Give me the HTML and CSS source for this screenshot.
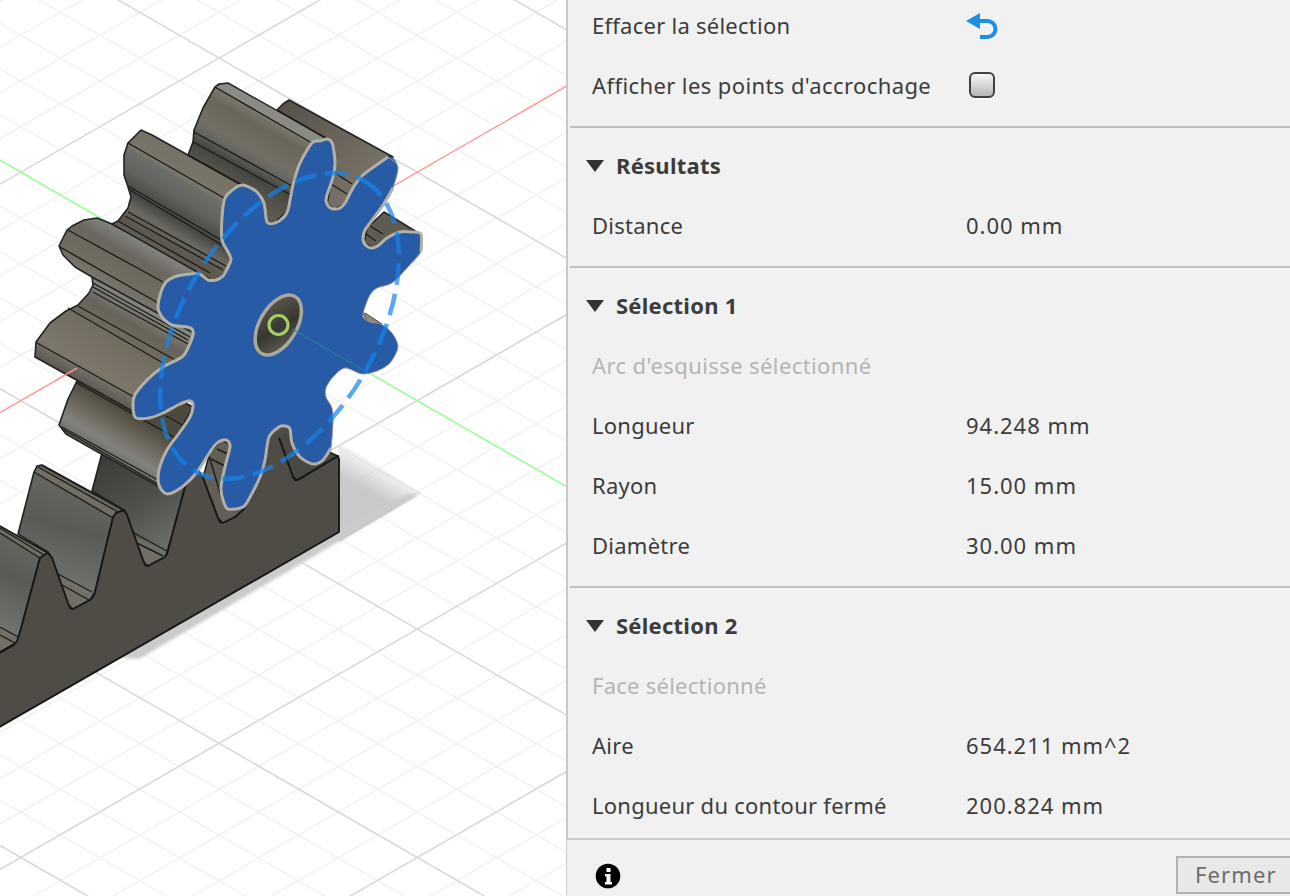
FILE: index.html
```
<!DOCTYPE html>
<html lang="fr">
<head>
<meta charset="utf-8">
<title>Mesurer</title>
<link rel="stylesheet" href="styles.css">
</head>
<body>
<main class="app">
<div class="viewport">
<svg class="scene" viewBox="0 0 567 896" width="567" height="896">
<defs>
<linearGradient id="ga" gradientUnits="userSpaceOnUse" x1="230" y1="90" x2="188" y2="164"><stop offset="0" stop-color="#858175"/><stop offset=".2" stop-color="#6a655a"/><stop offset=".48" stop-color="#746f65"/><stop offset=".6" stop-color="#656560"/><stop offset=".73" stop-color="#444540"/><stop offset="1" stop-color="#5e5950"/></linearGradient>
<linearGradient id="gd" gradientUnits="userSpaceOnUse" x1="160" y1="150" x2="113" y2="230"><stop offset="0" stop-color="#777267"/><stop offset=".14" stop-color="#7b766a"/><stop offset=".15" stop-color="#6d6f6a"/><stop offset=".35" stop-color="#62635e"/><stop offset=".55" stop-color="#454641"/><stop offset=".7" stop-color="#6b6961"/><stop offset=".85" stop-color="#5c564c"/><stop offset="1" stop-color="#6a645a"/></linearGradient>
<linearGradient id="ge" gradientUnits="userSpaceOnUse" x1="128" y1="232" x2="90" y2="299"><stop offset="0" stop-color="#858681"/><stop offset=".25" stop-color="#6a665e"/><stop offset=".6" stop-color="#726d62"/><stop offset=".8" stop-color="#7c7a73"/><stop offset="1" stop-color="#4f504b"/></linearGradient>
<linearGradient id="gg" gradientUnits="userSpaceOnUse" x1="130" y1="301" x2="83" y2="383"><stop offset="0" stop-color="#83847e"/><stop offset=".2" stop-color="#68635a"/><stop offset=".45" stop-color="#736d62"/><stop offset=".83" stop-color="#7d776b"/><stop offset="1" stop-color="#5b5a54"/></linearGradient>
<linearGradient id="gf" gradientUnits="userSpaceOnUse" x1="135" y1="415" x2="108" y2="461"><stop offset="0" stop-color="#4c493f"/><stop offset=".35" stop-color="#6a655b"/><stop offset=".7" stop-color="#83827c"/><stop offset="1" stop-color="#696861"/></linearGradient>
<linearGradient id="gb" gradientUnits="userSpaceOnUse" x1="285" y1="105" x2="370" y2="180"><stop offset="0" stop-color="#57534a"/><stop offset="1" stop-color="#797267"/></linearGradient>
<linearGradient id="gr" x1=".6" y1="0" x2=".4" y2="1"><stop offset="0" stop-color="#6b6b66"/><stop offset=".45" stop-color="#5a5b56"/><stop offset="1" stop-color="#7b7c77"/></linearGradient>
<linearGradient id="gr2" x1=".2" y1="0" x2=".7" y2="1"><stop offset="0" stop-color="#3c3d39"/><stop offset=".5" stop-color="#50514c"/><stop offset="1" stop-color="#73756f"/></linearGradient>
<linearGradient id="hole" x1="0" y1="1" x2="1" y2="0"><stop offset="0" stop-color="#6d685d"/><stop offset=".45" stop-color="#38372f"/><stop offset="1" stop-color="#625e54"/></linearGradient>
<linearGradient id="sh" gradientUnits="userSpaceOnUse" x1="385" y1="462" x2="368" y2="492"><stop offset="0" stop-color="#c6c6c6" stop-opacity="0"/><stop offset="1" stop-color="#c9c9c9"/></linearGradient>
<filter id="soft" x="-10%" y="-10%" width="120%" height="120%"><feGaussianBlur stdDeviation="1.5"/></filter>
</defs>

<g id="grid">
<path class="minor" d="M0-342.3l567 326.7m-567-281l567 326.7m-567-281l567 326.7m-567-281l567 326.7m-567-281l567 326.7m-567-281l567 326.7m-567-281l567 326.7m-567-281l567 326.7m-567-281l567 326.7m-567-281l567 326.7m-567-281l567 326.7m-567-281l567 326.7m-567-281l567 326.7m-567-281l567 326.7m-567-281l567 326.7m-567-281l567 326.7m-567-281l567 326.7m-567-281l567 326.7m-567-281l567 326.7m-567-281l567 326.7m-567-281l567 326.7m-567-281l567 326.7m-567-281l567 326.7m-567-281l567 326.7m-567-281l567 326.7m-567-281l567 326.7m-567-281l567 326.7"/>
<path class="minor" d="M0 1.5l567-326.7m-567 372.4l567-326.7m-567 372.4l567-326.7m-567 372.4l567-326.7m-567 372.4l567-326.7m-567 372.4l567-326.7m-567 372.4l567-326.7m-567 372.4l567-326.7m-567 372.4l567-326.7m-567 372.4l567-326.7m-567 372.4l567-326.7m-567 372.4l567-326.7m-567 372.4l567-326.7m-567 372.4l567-326.7m-567 372.4l567-326.7m-567 372.4l567-326.7m-567 372.4l567-326.7m-567 372.4l567-326.7m-567 372.4l567-326.7m-567 372.4l567-326.7m-567 372.4l567-326.7m-567 372.4l567-326.7m-567 372.4l567-326.7m-567 372.4l567-326.7m-567 372.4l567-326.7m-567 372.4l567-326.7m-567 372.4l567-326.7"/>
<path class="major" d="M0-296.6l567 326.7M0-68.2l567 326.7M0 388.6l567 326.7M0 617l567 326.7M0 845.4l567 326.7M0 184.2l567-326.7M0 641l567-326.7M0 869.4l567-326.7M0 1097.8l567-326.7"/>
</g>

<path d="M339 446L348 448L422 493L339 542Z" fill="url(#sh)"/>
<path d="M339 529L408 494L418 495L139 659L118 657Z" fill="#cbcbcb" filter="url(#soft)"/>
<path class="red" d="M0 412.6L567 85.9"/>
<path class="green" d="M0 160.2L567 486.9"/>

<g class="edge">
<path fill="url(#gr)" d="M-4 524L48 553 40 558 20 632 17 642 -4 654Z"/>
<path fill="url(#gr)" d="M34 472L37 466 42 465 124 510 113 518 95 592 90 600 73 609 68 603 52 558 48 552 18 534Z"/>
<path fill="url(#gr2)" d="M102 453L185 487 168 550 165 557 148 566 143 560 127 515 124 510 92 491Z"/>
<path fill="#625f57" d="M203 478L210 452 222 440 235 447 245 510 235 517 223 523 218 518Z"/>
<path fill="#4a4842" d="M278 435L289 427 320 448 338 456 297 480 293 477Z"/>
</g>
<path fill="#736e63" d="M35 473L40 467 121 511 113 517ZM0 531L0 527 46 553 40 558ZM132 535L165 554 148 565 142 559ZM58 577L90 596 73 608 67 602ZM0 628L17 639 0 650Z"/>
<path class="line" d="M34 472L113 518M38 467L120 513M41 465L123 510M0 533L40 558M0 528L44 555M0 526L48 553M132 532L167 551M137 543L163 556M58 574L92 592M62 585L89 600M0 627L20 638M0 635L15 643"/>
<path class="rack" d="M-4 655L14 645 17 641 20 632 40 558 44 555 48 553 52 558 68 603 70 608 73 609 90 600 93 597 95 592 113 517 116 513 124 510 127 515 143 560 145 565 148 566 165 557 167 554 168 550 185 487 198 470 203 478 218 518 220 522 223 523 235 517 244 509 266 440 278 435 293 477 295 480 298 480 338 456 339 459V532L-4 729Z"/>
<path d="M264 446L269 434 280 424 291 427 292 440 284 432 279 438Z" fill="#4f4c46"/>
<path d="M21 630L200 733M0 689L340 493M107 560L308 676M30 737L339 559" stroke="#77746c" stroke-opacity=".13" clip-path="inset(0 0 180px 0)"/>

<g class="edge">
<path fill="url(#gb)" d="M277 110L283 104 289 100 393 157 388 157 363 175 343 205 334 209 327 204 335 163 327 139Z"/>
<path fill="#5f5b53" d="M384 212L420 234 400 232 387 238 373 248 364 243 367 228Z"/>
<path fill="#91897b" stroke-width=".8" d="M363 314L365 313 382 324 368 323Z"/>
<path fill="url(#gf)" d="M77 381L135 405 180 400 193 407 175 440 158 486 66 434 59 425 68 399Z"/>
<path fill="url(#gg)" d="M92 277L93 285 89 293 78 305 66 311 50 323 36 342 35 357 134 412 193 350 195 328Z"/>
<path fill="url(#ge)" d="M112 224L97 218 84 220 72 226 67 230 59 246 63 255 75 267 92 277 192 332 228 290 220 280Z"/>
<path fill="url(#gd)" d="M141 130L128 143 124 155 124 175 128 187 131 197 128 208 118 221 112 224 208 278 216 284 233 262 222 216 245 187 152 135Z"/>
<path fill="url(#ga)" d="M215 87L219 84 228 83 329 140 312 143 300 163 293 185 288 210 275 223 265 222 264 203 257 192 242 185 188 155 193 142 194 130 203 108Z"/>
</g>
<path fill="#8b8b85" d="M215 87L228 84 326 139 312 143Z"/>
<path class="line" d="M215 87L312 143M194 132L292 186M193 142L291 195M188 155L242 185M277 110L325 138M335 173L352 184M331 184L347 194M370 226L383 234M366 234L376 241M128 143L224 198M128 186L223 241M130 190L222 245M128 212L226 266M125 216L223 270M118 221L210 273M68 230L163 282M60 247L160 304M93 283L190 337M93 287L188 340M93 292L188 344M78 306L175 360M68 308L163 363M37 343L134 397M77 383L174 437M166 416L184 426M62 427L158 480M64 430L158 484M211 459L227 467M217 449L230 455M207 449L221 496"/>
<path d="M55 380.900L77 368.200" class="red"/>

<path class="smooth" fill="#285ba5" d="M312 143L320 141 327 139 331 141 333 146 335 163 333 177 327 195 326 201 329 207 334 209 340 208 345 203 353 188 363 175 388 157 398 167 393 188 383 205 370 223 365 230 363 237 364 243 368 247 373 248 379 245 387 238 400 232 410 232 421 234 421 252 407 268 392 283 377 288 370 295 365 307 363 317 370 322 381 324 392 333 398 347 390 363 377 371 362 374 345 368 333 377 326 388 326 397 332 408 333 423 331 448 323 460 313 464 300 457 292 443 290 429 285 426 279 427 269 437 265 460 260 477 250 497 243 507 228 509 223 500 221 487 225 467 230 447 228 441 223 440 216 444 210 452 197 472 182 487 167 494 159 485 159 470 167 450 180 432 190 417 193 407 192 402 188 401 178 405 163 413 149 418 135 417 134 397 147 380 163 367 182 357 188 348 193 335 192 329 187 327 172 325 162 317 158 308 160 295 166 282 177 276 190 274 200 274 208 280 216 280 223 276 228 267 231 259 227 250 222 240 222 217 225 198 235 188 242 185 249 187 257 192 264 203 267 222 275 223 283 218 288 210 293 185 300 163Z"/>
<path class="rim smooth" d="M331 448L323 460 313 464 300 457 292 443 290 429 285 426 279 427 269 437 265 460 260 477 250 497 243 507 228 509 223 500 221 487 225 467 230 447 228 441 223 440 216 444 210 452 197 472 182 487 167 494 159 485 159 470 167 450 180 432 190 417 193 407 192 402 188 401 178 405 163 413 149 418 135 417 134 397 147 380 163 367 182 357 188 348 193 335 192 329 187 327 172 325 162 317 158 308 160 295 166 282 177 276 190 274 200 274 208 280 216 280 223 276 228 267 231 259 227 250 222 240 222 217 225 198 235 188 242 185 249 187 257 192 264 203 267 222 275 223 283 218 288 210 293 185 300 163 312 143 320 141 327 139 331 141 333 146 335 163 333 177 327 195 326 201 329 207 334 209 340 208 345 203 353 188 363 175 388 157"/>
<path class="rim smooth" d="M393 188L383 205 370 223 365 230 363 237 364 243 368 247 373 248 379 245 387 238 400 232 410 232 421 234 421 252"/>
<path class="smooth" fill="none" stroke="#999992" d="M388 157L398 167 393 188"/>
<path class="smooth" fill="none" stroke="#999992" d="M421 252L407 268 392 283 377 288 370 295 365 307 363 317 370 322 381 324 392 333 398 347 390 363 377 371 362 374 345 368 333 377 326 388 326 397 332 408 333 423 331 448"/>
<ellipse cx="278.3" cy="325" rx="33" ry="18.5" transform="rotate(-59.5 278.3 325)" fill="url(#hole)" stroke="#aaa79f" stroke-width="3.5"/>
<path d="M292 329L363 370" stroke="#287d9c" stroke-width="1.3"/>
<ellipse class="arc" cx="279.5" cy="326" rx="168" ry="97" transform="rotate(-59.5 279.5 326)"/>
<circle cx="278.5" cy="325" r="9.5" fill="none" stroke="#a0cf68" stroke-width="3.2"/>
</svg>
</div>

<section class="panel">
<div class="content">
<div class="group first">
<div class="row"><span class="label">Effacer la sélection</span><svg class="undo" width="34" height="28" viewBox="0 0 34 28"><path d="M0 8L14 0V16Z" fill="#1a8fe8"/><path d="M12 8H21.500A8 8 0 0 1 21.500 24H14" fill="none" stroke="#1a8fe8" stroke-width="4"/></svg></div>
<div class="row"><span class="label wide">Afficher les points d'accrochage</span><span class="check"></span></div>
</div>
<div class="group">
<div class="row head"><i class="tri"></i><span>Résultats</span></div>
<div class="row"><span class="label">Distance</span><span class="value">0.00 mm</span></div>
</div>
<div class="group">
<div class="row head"><i class="tri"></i><span>Sélection 1</span></div>
<div class="row muted wide"><span>Arc d'esquisse sélectionné</span></div>
<div class="row"><span class="label">Longueur</span><span class="value">94.248 mm</span></div>
<div class="row"><span class="label">Rayon</span><span class="value">15.00 mm</span></div>
<div class="row"><span class="label">Diamètre</span><span class="value">30.00 mm</span></div>
</div>
<div class="group">
<div class="row head"><i class="tri"></i><span>Sélection 2</span></div>
<div class="row muted"><span>Face sélectionné</span></div>
<div class="row"><span class="label">Aire</span><span class="value">654.211 mm^2</span></div>
<div class="row"><span class="label">Longueur du contour fermé</span><span class="value">200.824 mm</span></div>
</div>
</div>
<footer class="footer">
<svg width="26" height="26" viewBox="0 0 26 26"><circle cx="13" cy="13" r="12.300" fill="#000"/><path d="M11.500 5h4v4h-4zM10 11h5.500v8H17v2.500h-7V19h1.500v-5.500H10z" fill="#fff"/></svg>
<button class="close">Fermer</button>
</footer>
</section>
</main>
<script src="scene.js"></script>
</body>
</html>
```
FILE: styles.css
```
* { box-sizing: border-box; }
body { margin: 0; background: #fff; overflow: hidden; }
.app { display: flex; width: 1290px; height: 896px; overflow: hidden; }
.viewport { width: 566px; flex: none; overflow: hidden; }
.scene { display: block; }
.minor { fill: none; stroke: #f0f0f0; stroke-width: 1.3; }
.major { fill: none; stroke: #d7d7d7; stroke-width: 1.4; }
.red { fill: none; stroke: #ff9a9a; stroke-width: 1.5; }
.green { fill: none; stroke: #95ff95; stroke-width: 1.5; }
.edge { stroke: #22221f; stroke-width: 1.6; stroke-linejoin: round; }
.line { fill: none; stroke: #1c1c18; stroke-width: 1.4; }
.rack { fill: #4f4c46; stroke: #171715; stroke-width: 1.9; stroke-linejoin: round; }
.rim { fill: none; stroke: #b3b0a9; stroke-width: 3; stroke-linejoin: round; }
.arc { fill: none; stroke: #1683eb; stroke-opacity: .7; stroke-width: 4.5; stroke-dasharray: 22 9; }
.panel {
  width: 724px;
  flex: none;
  display: flex;
  flex-direction: column;
  background: #f1f1f1;
  color: #3c3c3c;
  font: 22px/30px "Noto Sans", "Open Sans", sans-serif;
  letter-spacing: .25px;
}
.content { height: 838px; border-left: 2px solid #c9c9c9; padding-left: 2px; }
.group { border-top: 2px solid #c1c1c1; padding: 8px 0 10px 22px; }
.first { border: 0; padding-top: 0; margin-top: -4px; }
.row { display: flex; align-items: center; height: 60px; padding-bottom: 2px; white-space: nowrap; }
.label { width: 374px; flex: none; }
.wide { letter-spacing: .4px; }
.value { letter-spacing: .98px; }
.head { font-weight: 700; margin-left: -6px; }
.tri { width: 0; height: 0; border: 9px solid transparent; border-top: 12px solid #333; border-bottom: 0; margin: 2px 12px 0 0; }
.muted { color: #b5b5b5; }
.undo { margin-top: 4px; }
.check { width: 26px; height: 26px; margin: 0 0 0 3px; border: 2px solid #414141; border-radius: 6px; background: linear-gradient(#f8f8f8, #b5b5b5); box-shadow: 0 2px 0 #fff; }
.footer { flex: 1; display: flex; justify-content: space-between; align-items: flex-start; border-top: 2px solid #c9c9c9; border-left: 1px solid #c9c9c9; padding: 16px 0 0 28px; }
.footer svg { margin-top: 7px; }
.close { width: 124px; height: 38px; margin-right: -10px; padding: 0 0 2px 17px; text-align: left; border: 2px solid #b3b3b3; background: #e8e8e8; color: #6c6c6c; font: inherit; letter-spacing: 1.1px; }
```
FILE: scene.js
```
// Turns the gear's outline points into a Catmull-Rom curve.
document.querySelectorAll('.smooth').forEach(function (path) {
  var d = path.getAttribute('d');
  var closed = /Z$/.test(d);
  var nums = d.match(/[\d.]+/g).map(Number);
  var pts = [];
  for (var i = 0; i < nums.length; i += 2) pts.push([nums[i], nums[i + 1]]);
  var n = pts.length;
  function at(k) {
    return closed ? pts[(k + n) % n] : pts[Math.max(0, Math.min(n - 1, k))];
  }
  var out = 'M' + pts[0].join(' ');
  for (var j = 0; j < (closed ? n : n - 1); j++) {
    var a = at(j - 1), b = at(j), c = at(j + 1), e = at(j + 2);
    out += 'C' + [
      b[0] + (c[0] - a[0]) / 7, b[1] + (c[1] - a[1]) / 7,
      c[0] - (e[0] - b[0]) / 7, c[1] - (e[1] - b[1]) / 7,
      c[0], c[1]
    ].join(' ');
  }
  path.setAttribute('d', out + (closed ? 'Z' : ''));
});
```
